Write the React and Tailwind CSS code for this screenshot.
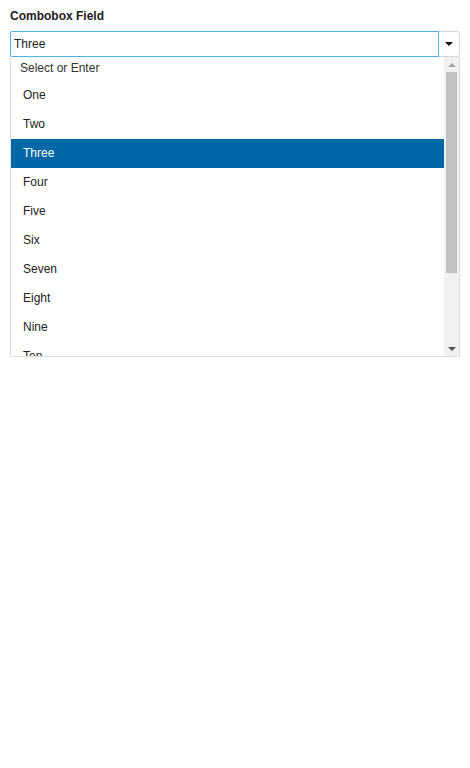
import React, { useState } from 'react';

const options = ['One', 'Two', 'Three', 'Four', 'Five', 'Six', 'Seven', 'Eight', 'Nine', 'Ten'];

const App = () => {
  const [value, setValue] = useState('Three');

  return (
    <div className="p-[10px] bg-white min-h-screen" style={{ fontFamily: '"Liberation Sans", Arial, sans-serif' }}>
      <div className="text-[12px] leading-[12px] font-bold text-[#222] mb-[9px]">Combobox Field</div>

      <div className="flex w-[450px] h-[26px]">
        <input
          value={value}
          onChange={(e) => setValue(e.target.value)}
          className="w-[429px] h-[26px] border border-[#4fb3e4] rounded-l-[2px] px-[3px] text-[12px] text-[#222] outline-none"
        />
        <button className="w-[21px] h-[26px] border border-l-0 border-[#d6d6d6] rounded-r-[3px] bg-white flex items-center justify-center">
          <span className="w-0 h-0 border-l-[4px] border-r-[4px] border-t-[4px] border-l-transparent border-r-transparent border-t-[#111]" />
        </button>
      </div>

      {/* dropdown list */}
      <div className="w-[450px] h-[300px] border border-t-0 border-[#dcdcdc] flex overflow-hidden">
        <div className="flex-1 overflow-hidden">
          <div className="h-[24px] pl-[9px] pb-[2px] flex items-center text-[12px] text-[#333]">Select or Enter</div>
          {options.map(opt => (
            <div
              key={opt}
              onClick={() => setValue(opt)}
              className={
                opt === value
                  ? 'h-[29px] pl-[12px] pb-[2px] flex items-center text-[12px] bg-[#0067a6] text-white'
                  : 'h-[29px] pl-[12px] pb-[2px] flex items-center text-[12px] text-[#222]'
              }
            >
              {opt}
            </div>
          ))}
        </div>
        <div className="w-[15px] bg-[#f1f1f1] flex flex-col items-center shrink-0">
          <div className="h-[15px] flex items-center justify-center">
            <span className="w-0 h-0 border-l-[4px] border-r-[4px] border-b-[4px] border-l-transparent border-r-transparent border-b-[#a3a3a3]" />
          </div>
          <div className="w-[11px] h-[201px] bg-[#c1c1c1]" />
          <div className="flex-1" />
          <div className="h-[15px] flex items-center justify-center">
            <span className="w-0 h-0 border-l-[4px] border-r-[4px] border-t-[4px] border-l-transparent border-r-transparent border-t-[#505050]" />
          </div>
        </div>
      </div>
    </div>
  );
};

export default App;
